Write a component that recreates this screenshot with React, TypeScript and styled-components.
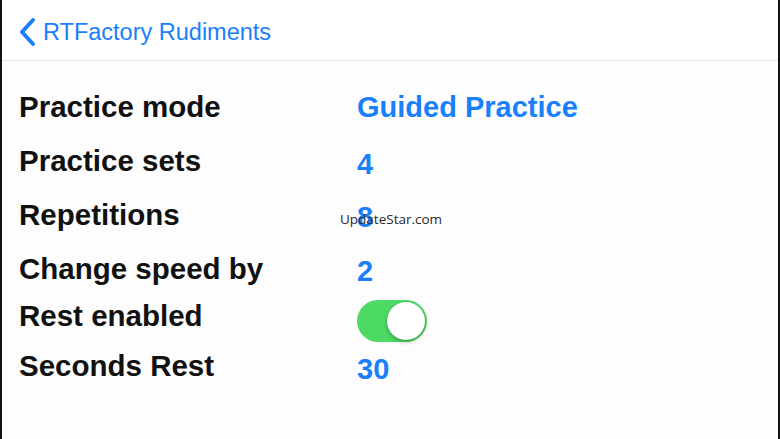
import styled, { createGlobalStyle } from "styled-components";

const GlobalStyle = createGlobalStyle`
  html, body {
    margin: 0;
    padding: 0;
    background: #ffffff;
  }
  * {
    box-sizing: border-box;
  }
`;

const Screen = styled.div`
  position: relative;
  width: 780px;
  height: 439px;
  overflow: hidden;
  background: #fdfdfd;
  border-left: 2px solid #111;
  border-right: 2px solid #111;
  font-family: "Liberation Sans", Arial, sans-serif;
`;

const NavBar = styled.header`
  height: 61px;
  display: flex;
  align-items: center;
  gap: 5px;
  padding: 4px 0 0 16px;
  background: #ffffff;
  border-bottom: 1px solid #e2e2e2;
`;

const BackLabel = styled.span`
  font-size: 23.5px;
  color: #1a7ffb;
  margin-top: 1px;
`;

const Settings = styled.div`
  padding: 31px 0 0 17px;
`;

const Row = styled.div<{ $h: number }>`
  display: grid;
  grid-template-columns: 338px 1fr;
  align-items: start;
  height: ${(p) => p.$h}px;
`;

const Label = styled.div`
  font-size: 29.5px;
  font-weight: 700;
  line-height: 1;
  color: #111;
`;

const Value = styled.div<{ $drop: number }>`
  font-size: 29px;
  font-weight: 700;
  line-height: 1;
  color: #1a7ffb;
  margin-top: ${(p) => p.$drop}px;
`;

const Switch = styled.div<{ $on: boolean }>`
  width: 70px;
  height: 42px;
  margin-top: -1px;
  border-radius: 21px;
  background: ${(p) => (p.$on ? "#4cd964" : "#e5e5ea")};
  display: flex;
  align-items: center;
  justify-content: ${(p) => (p.$on ? "flex-end" : "flex-start")};
  padding: 2px;
`;

const Knob = styled.div`
  width: 38px;
  height: 38px;
  border-radius: 50%;
  background: #ffffff;
  box-shadow: 0 2px 4px rgba(0, 0, 0, 0.25), 0 0 1px rgba(0, 0, 0, 0.2);
`;

const Watermark = styled.div`
  position: absolute;
  left: 338px;
  top: 210px;
  font-family: "Open Sans", "Noto Sans", sans-serif;
  font-size: 13.5px;
  color: #2a2a2a;
`;

const rows = [
  { label: "Practice mode", value: "Guided Practice", h: 54, drop: 1 },
  { label: "Practice sets", value: "4", h: 54, drop: 4 },
  { label: "Repetitions", value: "8", h: 54, drop: 3 },
  { label: "Change speed by", value: "2", h: 47, drop: 3 },
  { label: "Rest enabled", toggle: true, h: 50, drop: 0 },
  { label: "Seconds Rest", value: "30", h: 50, drop: 4 },
];

function Chevron() {
  return (
    <svg width="20" height="30" viewBox="0 0 20 30">
      <polyline
        points="15,3 4,15 15,27"
        fill="none"
        stroke="#1a7ffb"
        strokeWidth="4"
        strokeLinecap="round"
        strokeLinejoin="round"
      />
    </svg>
  );
}

export default function App() {
  return (
    <Screen>
      <GlobalStyle />
      <NavBar>
        <Chevron />
        <BackLabel>RTFactory Rudiments</BackLabel>
      </NavBar>
      <Settings>
        {rows.map((r) => (
          <Row key={r.label} $h={r.h}>
            <Label>{r.label}</Label>
            {r.toggle ? (
              <Switch $on>
                <Knob />
              </Switch>
            ) : (
              <Value $drop={r.drop}>{r.value}</Value>
            )}
          </Row>
        ))}
      </Settings>
      <Watermark>UpdateStar.com</Watermark>
    </Screen>
  );
}
